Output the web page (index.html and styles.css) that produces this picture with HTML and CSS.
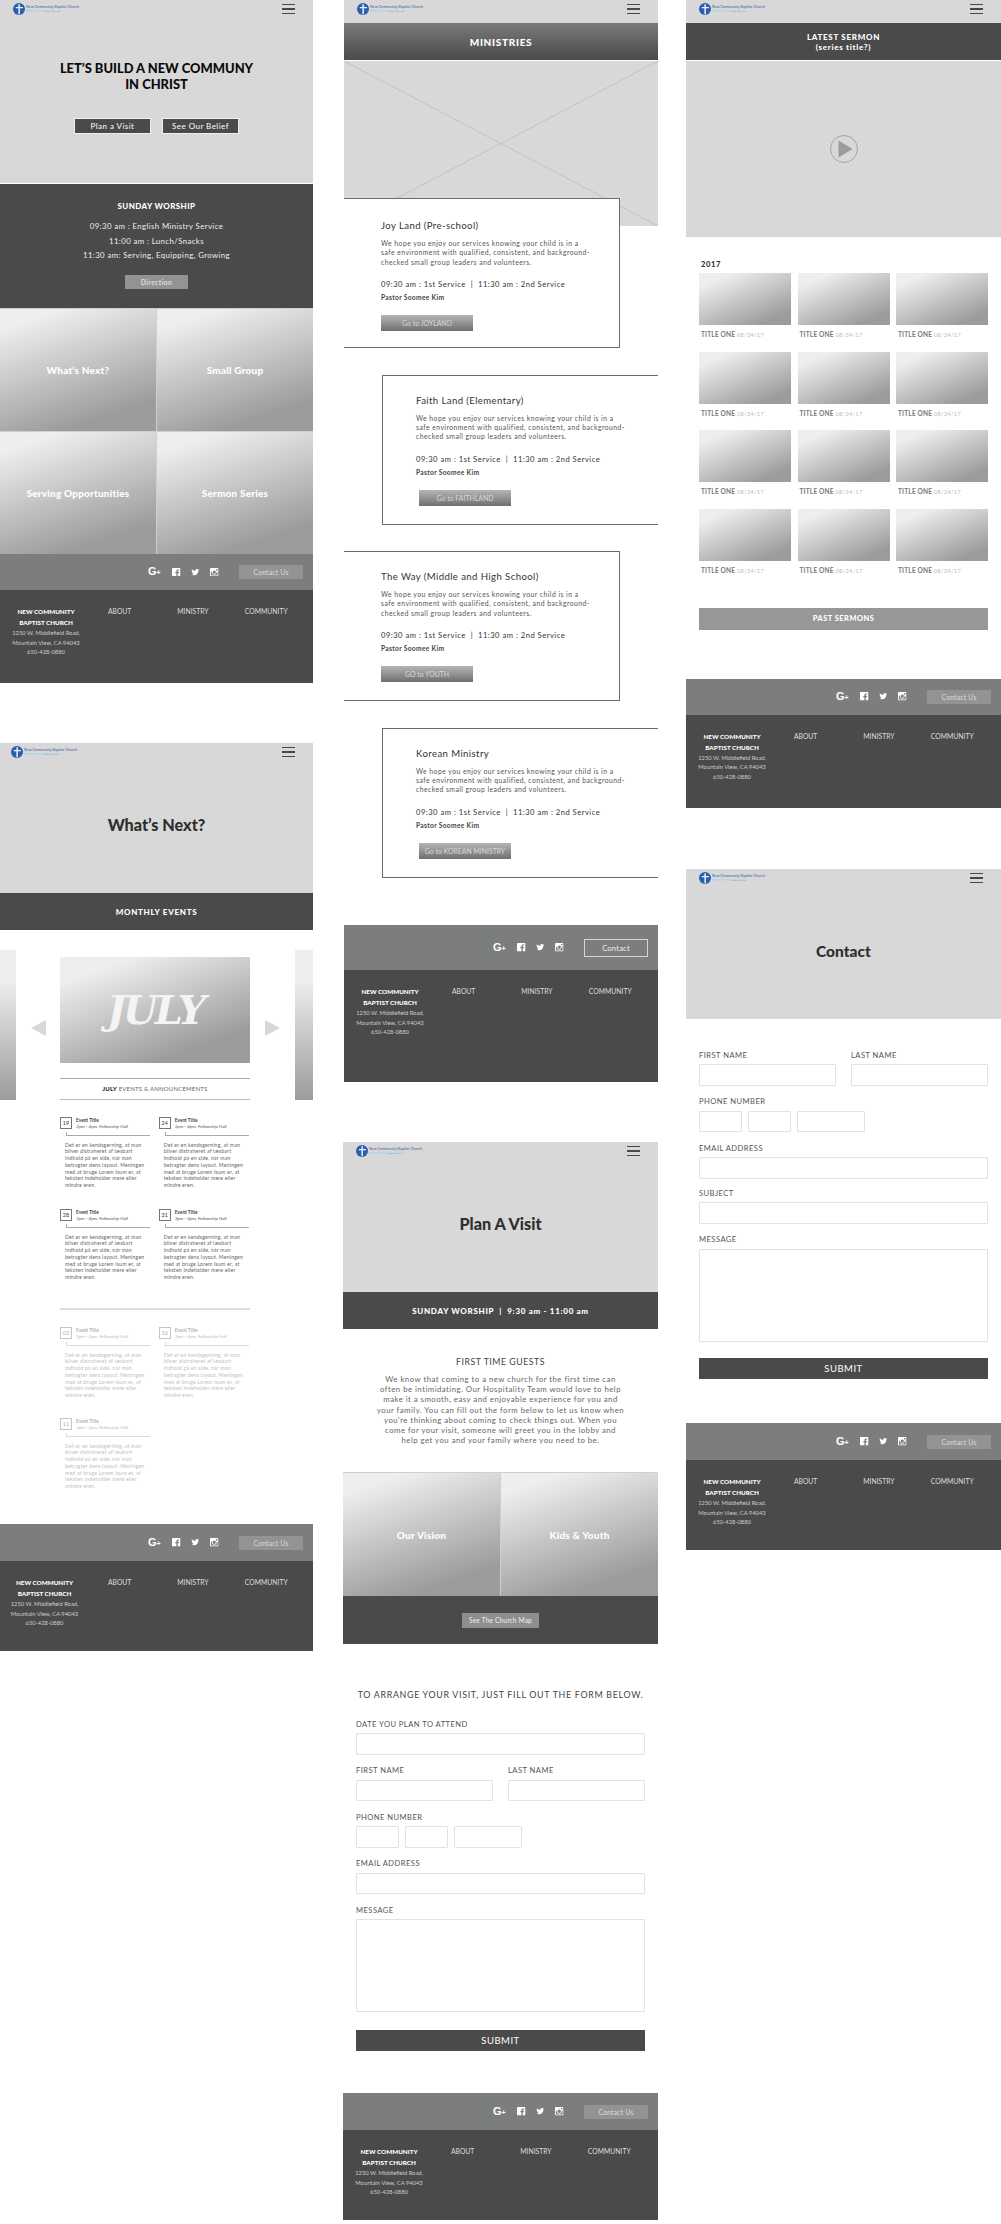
FILE: index.html
```html
<!DOCTYPE html>
<html lang="en">
<head>
    <meta charset="UTF-8">
    <meta name="viewport" content="width=device-width, initial-scale=1.0">
    <title>New Community Baptist Church - Wireframes</title>
    <link rel="stylesheet" href="styles.css">
</head>
<body>
    <svg class="defs" width="0" height="0">
        <symbol id="mark" viewBox="0 0 12 12">
            <circle cx="6" cy="6" r="6" fill="#2b5fae"/>
            <path d="M5.400 1.200h1.500v2.700h3v1.300h-3v6H5.400v-6H2.800V3.900h2.600z" fill="#eaf2fa"/>
        </symbol>
        <symbol id="fb" viewBox="0 0 12 12">
            <path fill-rule="evenodd" d="M1 0h10a1 1 0 0 1 1 1v10a1 1 0 0 1-1 1H8.200V7.400h1.500l.3-1.800H8.200V4.600c0-.6.2-.9.9-.9h1V2.100H8.600C6.900 2.100 6.200 3 6.200 4.400v1.200H4.700v1.800h1.500V12H1a1 1 0 0 1-1-1V1a1 1 0 0 1 1-1z"/>
        </symbol>
        <symbol id="tw" viewBox="0 0 24 24">
            <path d="M23 4.900a9 9 0 0 1-2.600.7 4.500 4.500 0 0 0 2-2.500 9 9 0 0 1-2.900 1.100 4.500 4.500 0 0 0-7.700 4.100A12.800 12.800 0 0 1 2.500 3.600a4.500 4.500 0 0 0 1.400 6A4.500 4.500 0 0 1 1.900 9v.1a4.500 4.500 0 0 0 3.600 4.400 4.500 4.500 0 0 1-2 .1 4.500 4.500 0 0 0 4.200 3.100A9 9 0 0 1 1 18.600 12.800 12.800 0 0 0 7.900 20.600c8.300 0 12.900-6.900 12.900-12.900v-.6A9 9 0 0 0 23 4.900z"/>
        </symbol>
        <symbol id="ig" viewBox="0 0 12 12">
            <path fill-rule="evenodd" d="M1.500 0h9A1.500 1.500 0 0 1 12 1.500v9a1.500 1.500 0 0 1-1.500 1.500h-9A1.500 1.500 0 0 1 0 10.500v-9A1.500 1.500 0 0 1 1.500 0zM8.500 1.500v2h2v-2zM6 3.700a2.300 2.300 0 1 0 0 4.600 2.300 2.300 0 0 0 0-4.600zM1.300 5.200v5.500h9.400V5.200H9.300a3.400 3.400 0 1 1-6.600 0z"/>
        </symbol>
    </svg>

    <div class="canvas">

        <!-- home -->
        <section class="board board-home">
            <div class="hero hero-home">
                <div class="nav">
                    <div class="logo"><svg class="logo-mark"><use href="#mark"/></svg><div class="logo-name">New Community Baptist Church<small>WELCOME</small></div></div>
                    <div class="burger"><i></i><i></i><i></i></div>
                </div>
                <h1 class="hero-lead">LET’S BUILD A NEW COMMUNY<br>IN CHRIST</h1>
                <div class="hero-btns">
                    <a class="btn-dark">Plan a Visit</a>
                    <a class="btn-dark">See Our Belief</a>
                </div>
            </div>
            <div class="worship">
                <h3>SUNDAY WORSHIP</h3>
                <p>09:30 am : English Ministry Service</p>
                <p>11:00 am : Lunch/Snacks</p>
                <p>11:30 am: Serving, Equipping, Growing</p>
                <a class="btn-grey">Direction</a>
            </div>
            <div class="tiles">
                <div class="tile">What’s Next?</div>
                <div class="tile">Small Group</div>
                <div class="tile">Serving Opportunities</div>
                <div class="tile">Sermon Series</div>
            </div>
            <footer>
                <div class="foot-bar">
                    <span class="gplus">G<small>+</small></span>
                    <svg class="soc"><use href="#fb"/></svg>
                    <svg class="soc"><use href="#tw"/></svg>
                    <svg class="soc"><use href="#ig"/></svg>
                    <a class="btn-contact">Contact Us</a>
                </div>
                <div class="foot-main">
                    <div class="foot-brand"><b>NEW COMMUNITY<br>BAPTIST CHURCH</b><p>1250 W. Middlefield Road,<br>Mountain View, CA 94043<br>650-428-0880</p></div>
                    <div>ABOUT</div>
                    <div>MINISTRY</div>
                    <div>COMMUNITY</div>
                </div>
            </footer>
        </section>

        <!-- ministries -->
        <section class="board board-min">
            <div class="nav">
                <div class="logo"><svg class="logo-mark"><use href="#mark"/></svg><div class="logo-name">New Community Baptist Church<small>WELCOME</small></div></div>
                <div class="burger"><i></i><i></i><i></i></div>
            </div>
            <div class="band band-grad">MINISTRIES</div>
            <svg class="placeholder" viewBox="0 0 314 165" preserveAspectRatio="none">
                <line x1="0" y1="0" x2="314" y2="165"/>
                <line x1="314" y1="0" x2="0" y2="165"/>
            </svg>
            <article class="card card-l card-first">
                <h4>Joy Land (Pre-school)</h4>
                <p>We hope you enjoy our services knowing your child is in a<br>safe environment with qualified, consistent, and background-<br>checked small group leaders and volunteers.</p>
                <div class="card-time">09:30 am : 1st Service &nbsp;|&nbsp; 11:30 am : 2nd Service</div>
                <div class="card-pastor">Pastor Soomee Kim</div>
                <a class="btn-go">Go to JOYLAND</a>
            </article>
            <article class="card card-r">
                <h4>Faith Land (Elementary)</h4>
                <p>We hope you enjoy our services knowing your child is in a<br>safe environment with qualified, consistent, and background-<br>checked small group leaders and volunteers.</p>
                <div class="card-time">09:30 am : 1st Service &nbsp;|&nbsp; 11:30 am : 2nd Service</div>
                <div class="card-pastor">Pastor Soomee Kim</div>
                <a class="btn-go">Go to FAITHLAND</a>
            </article>
            <article class="card card-l">
                <h4>The Way (Middle and High School)</h4>
                <p>We hope you enjoy our services knowing your child is in a<br>safe environment with qualified, consistent, and background-<br>checked small group leaders and volunteers.</p>
                <div class="card-time">09:30 am : 1st Service &nbsp;|&nbsp; 11:30 am : 2nd Service</div>
                <div class="card-pastor">Pastor Soomee Kim</div>
                <a class="btn-go">GO to YOUTH</a>
            </article>
            <article class="card card-r">
                <h4>Korean Ministry</h4>
                <p>We hope you enjoy our services knowing your child is in a<br>safe environment with qualified, consistent, and background-<br>checked small group leaders and volunteers.</p>
                <div class="card-time">09:30 am : 1st Service &nbsp;|&nbsp; 11:30 am : 2nd Service</div>
                <div class="card-pastor">Pastor Soomee Kim</div>
                <a class="btn-go">Go to KOREAN MINISTRY</a>
            </article>
            <footer class="foot-tall">
                <div class="foot-bar">
                    <span class="gplus">G<small>+</small></span>
                    <svg class="soc"><use href="#fb"/></svg>
                    <svg class="soc"><use href="#tw"/></svg>
                    <svg class="soc"><use href="#ig"/></svg>
                    <a class="btn-contact btn-outline">Contact</a>
                </div>
                <div class="foot-main">
                    <div class="foot-brand"><b>NEW COMMUNITY<br>BAPTIST CHURCH</b><p>1250 W. Middlefield Road,<br>Mountain View, CA 94043<br>650-428-0880</p></div>
                    <div>ABOUT</div>
                    <div>MINISTRY</div>
                    <div>COMMUNITY</div>
                </div>
            </footer>
        </section>

        <!-- sermons -->
        <section class="board board-sermon">
            <div class="nav">
                <div class="logo"><svg class="logo-mark"><use href="#mark"/></svg><div class="logo-name">New Community Baptist Church<small>WELCOME</small></div></div>
                <div class="burger"><i></i><i></i><i></i></div>
            </div>
            <div class="band band-two">LATEST SERMON<br>(series title?)</div>
            <div class="video">
                <svg width="30" height="30" viewBox="0 0 30 30">
                    <circle cx="15" cy="15" r="13.500" fill="none" stroke="#a3a3a3" stroke-width="1"/>
                    <path d="M9.500 6.500v17l14-8.500z" fill="#9b9b9b"/>
                </svg>
            </div>
            <div class="year">2017</div>
            <div class="thumbs">
                <figure><div class="thumb"></div><figcaption>TITLE ONE <span>08/24/17</span></figcaption></figure>
                <figure><div class="thumb"></div><figcaption>TITLE ONE <span>08/24/17</span></figcaption></figure>
                <figure><div class="thumb"></div><figcaption>TITLE ONE <span>08/24/17</span></figcaption></figure>
                <figure><div class="thumb"></div><figcaption>TITLE ONE <span>08/24/17</span></figcaption></figure>
                <figure><div class="thumb"></div><figcaption>TITLE ONE <span>08/24/17</span></figcaption></figure>
                <figure><div class="thumb"></div><figcaption>TITLE ONE <span>08/24/17</span></figcaption></figure>
                <figure><div class="thumb"></div><figcaption>TITLE ONE <span>08/24/17</span></figcaption></figure>
                <figure><div class="thumb"></div><figcaption>TITLE ONE <span>08/24/17</span></figcaption></figure>
                <figure><div class="thumb"></div><figcaption>TITLE ONE <span>08/24/17</span></figcaption></figure>
                <figure><div class="thumb"></div><figcaption>TITLE ONE <span>08/24/17</span></figcaption></figure>
                <figure><div class="thumb"></div><figcaption>TITLE ONE <span>08/24/17</span></figcaption></figure>
                <figure><div class="thumb"></div><figcaption>TITLE ONE <span>08/24/17</span></figcaption></figure>
            </div>
            <a class="btn-past">PAST SERMONS</a>
            <footer>
                <div class="foot-bar">
                    <span class="gplus">G<small>+</small></span>
                    <svg class="soc"><use href="#fb"/></svg>
                    <svg class="soc"><use href="#tw"/></svg>
                    <svg class="soc"><use href="#ig"/></svg>
                    <a class="btn-contact">Contact Us</a>
                </div>
                <div class="foot-main">
                    <div class="foot-brand"><b>NEW COMMUNITY<br>BAPTIST CHURCH</b><p>1250 W. Middlefield Road,<br>Mountain View, CA 94043<br>650-428-0880</p></div>
                    <div>ABOUT</div>
                    <div>MINISTRY</div>
                    <div>COMMUNITY</div>
                </div>
            </footer>
        </section>

        <!-- what's next -->
        <section class="board board-next">
            <div class="hero hero-page">
                <div class="nav nav-tight">
                    <div class="logo"><svg class="logo-mark"><use href="#mark"/></svg><div class="logo-name">New Community Baptist Church<small>WELCOME</small></div></div>
                    <div class="burger"><i></i><i></i><i></i></div>
                </div>
                <h1 class="hero-title">What’s Next?</h1>
            </div>
            <div class="band band-dark">MONTHLY EVENTS</div>
            <div class="carousel">
                <div class="side"></div>
                <div class="arrow arrow-l"></div>
                <div class="month">
                    <div class="month-img">JULY</div>
                    <div class="month-cap"><b>JULY</b> EVENTS &amp; ANNOUNCEMENTS</div>
                </div>
                <div class="arrow arrow-r"></div>
                <div class="side"></div>
            </div>
            <div class="events">
                <div class="event">
                    <div class="event-head"><span class="date">19</span><div><b>Event Title</b><em>3pm - 4pm, Fellowship Hall</em></div></div>
                    <div class="event-rule"></div>
                    <p>Det er en kendsgerning, at man<br>bliver distraheret af læsbart<br>indhold på en side, når man<br>betragter dens layout. Meningen<br>med at bruge Lorem Isum er, at<br>teksten indeholder mere eller<br>mindre eren.</p>
                </div>
                <div class="event">
                    <div class="event-head"><span class="date">24</span><div><b>Event Title</b><em>3pm - 4pm, Fellowship Hall</em></div></div>
                    <div class="event-rule"></div>
                    <p>Det er en kendsgerning, at man<br>bliver distraheret af læsbart<br>indhold på en side, når man<br>betragter dens layout. Meningen<br>med at bruge Lorem Isum er, at<br>teksten indeholder mere eller<br>mindre eren.</p>
                </div>
                <div class="event">
                    <div class="event-head"><span class="date">28</span><div><b>Event Title</b><em>3pm - 4pm, Fellowship Hall</em></div></div>
                    <div class="event-rule"></div>
                    <p>Det er en kendsgerning, at man<br>bliver distraheret af læsbart<br>indhold på en side, når man<br>betragter dens layout. Meningen<br>med at bruge Lorem Isum er, at<br>teksten indeholder mere eller<br>mindre eren.</p>
                </div>
                <div class="event">
                    <div class="event-head"><span class="date">31</span><div><b>Event Title</b><em>3pm - 4pm, Fellowship Hall</em></div></div>
                    <div class="event-rule"></div>
                    <p>Det er en kendsgerning, at man<br>bliver distraheret af læsbart<br>indhold på en side, når man<br>betragter dens layout. Meningen<br>med at bruge Lorem Isum er, at<br>teksten indeholder mere eller<br>mindre eren.</p>
                </div>
            </div>
            <div class="events-rule"></div>
            <div class="events events-past">
                <div class="event">
                    <div class="event-head"><span class="date">03</span><div><b>Event Title</b><em>3pm - 4pm, Fellowship Hall</em></div></div>
                    <div class="event-rule"></div>
                    <p>Det er en kendsgerning, at man<br>bliver distraheret af læsbart<br>indhold på en side, når man<br>betragter dens layout. Meningen<br>med at bruge Lorem Isum er, at<br>teksten indeholder mere eller<br>mindre eren.</p>
                </div>
                <div class="event">
                    <div class="event-head"><span class="date">10</span><div><b>Event Title</b><em>3pm - 4pm, Fellowship Hall</em></div></div>
                    <div class="event-rule"></div>
                    <p>Det er en kendsgerning, at man<br>bliver distraheret af læsbart<br>indhold på en side, når man<br>betragter dens layout. Meningen<br>med at bruge Lorem Isum er, at<br>teksten indeholder mere eller<br>mindre eren.</p>
                </div>
                <div class="event">
                    <div class="event-head"><span class="date">11</span><div><b>Event Title</b><em>3pm - 4pm, Fellowship Hall</em></div></div>
                    <div class="event-rule"></div>
                    <p>Det er en kendsgerning, at man<br>bliver distraheret af læsbart<br>indhold på en side, når man<br>betragter dens layout. Meningen<br>med at bruge Lorem Isum er, at<br>teksten indeholder mere eller<br>mindre eren.</p>
                </div>
            </div>
            <footer>
                <div class="foot-bar">
                    <span class="gplus">G<small>+</small></span>
                    <svg class="soc"><use href="#fb"/></svg>
                    <svg class="soc"><use href="#tw"/></svg>
                    <svg class="soc"><use href="#ig"/></svg>
                    <a class="btn-contact">Contact Us</a>
                </div>
                <div class="foot-main">
                    <div class="foot-brand"><b>NEW COMMUNITY<br>BAPTIST CHURCH</b><p>1250 W. Middlefield Road,<br>Mountain View, CA 94043<br>650-428-0880</p></div>
                    <div>ABOUT</div>
                    <div>MINISTRY</div>
                    <div>COMMUNITY</div>
                </div>
            </footer>
        </section>

        <!-- plan a visit -->
        <section class="board board-plan">
            <div class="hero hero-page">
                <div class="nav">
                    <div class="logo"><svg class="logo-mark"><use href="#mark"/></svg><div class="logo-name">New Community Baptist Church<small>WELCOME</small></div></div>
                    <div class="burger"><i></i><i></i><i></i></div>
                </div>
                <h1 class="hero-title">Plan A Visit</h1>
            </div>
            <div class="band band-dark">SUNDAY WORSHIP &nbsp;|&nbsp; 9:30 am - 11:00 am</div>
            <div class="guests">
                <h3>FIRST TIME GUESTS</h3>
                <p>We know that coming to a new church for the first time can<br>often be intimidating. Our Hospitality Team would love to help<br>make it a smooth, easy and enjoyable experience for you and<br>your family. You can fill out the form below to let us know when<br>you're thinking about coming to check things out. When you<br>come for your visit, someone will greet you in the lobby and<br>help get you and your family where you need to be.</p>
            </div>
            <div class="tiles">
                <div class="tile">Our Vision</div>
                <div class="tile">Kids &amp; Youth</div>
            </div>
            <div class="map-bar"><a class="btn-map">See The Church Map</a></div>
            <h3 class="form-lead">TO ARRANGE YOUR VISIT, JUST FILL OUT THE FORM BELOW.</h3>
            <form class="form">
                <label class="field">DATE YOU PLAN TO ATTEND<input type="text"></label>
                <div class="form-row">
                    <label class="field">FIRST NAME<input type="text"></label>
                    <label class="field">LAST NAME<input type="text"></label>
                </div>
                <div class="form-phone">
                    <label class="field">PHONE NUMBER<span class="phone"><input type="text"><input type="text"><input type="text"></span></label>
                </div>
                <label class="field">EMAIL ADDRESS<input type="text"></label>
                <label class="field">MESSAGE<textarea></textarea></label>
                <div class="submit">SUBMIT</div>
            </form>
            <footer class="foot-plan">
                <div class="foot-bar">
                    <span class="gplus">G<small>+</small></span>
                    <svg class="soc"><use href="#fb"/></svg>
                    <svg class="soc"><use href="#tw"/></svg>
                    <svg class="soc"><use href="#ig"/></svg>
                    <a class="btn-contact">Contact Us</a>
                </div>
                <div class="foot-main">
                    <div class="foot-brand"><b>NEW COMMUNITY<br>BAPTIST CHURCH</b><p>1250 W. Middlefield Road,<br>Mountain View, CA 94043<br>650-428-0880</p></div>
                    <div>ABOUT</div>
                    <div>MINISTRY</div>
                    <div>COMMUNITY</div>
                </div>
            </footer>
        </section>

        <!-- contact -->
        <section class="board board-contact">
            <div class="hero hero-page">
                <div class="nav">
                    <div class="logo"><svg class="logo-mark"><use href="#mark"/></svg><div class="logo-name">New Community Baptist Church<small>WELCOME</small></div></div>
                    <div class="burger"><i></i><i></i><i></i></div>
                </div>
                <h1 class="hero-title">Contact</h1>
            </div>
            <form class="form form-contact">
                <div class="form-row">
                    <label class="field">FIRST NAME<input type="text"></label>
                    <label class="field">LAST NAME<input type="text"></label>
                </div>
                <div class="form-phone">
                    <label class="field">PHONE NUMBER<span class="phone"><input type="text"><input type="text"><input type="text"></span></label>
                </div>
                <label class="field field-tight">EMAIL ADDRESS<input type="text"></label>
                <label class="field">SUBJECT<input type="text"></label>
                <label class="field">MESSAGE<textarea></textarea></label>
                <div class="submit">SUBMIT</div>
            </form>
            <footer class="foot-plan">
                <div class="foot-bar">
                    <span class="gplus">G<small>+</small></span>
                    <svg class="soc"><use href="#fb"/></svg>
                    <svg class="soc"><use href="#tw"/></svg>
                    <svg class="soc"><use href="#ig"/></svg>
                    <a class="btn-contact">Contact Us</a>
                </div>
                <div class="foot-main">
                    <div class="foot-brand"><b>NEW COMMUNITY<br>BAPTIST CHURCH</b><p>1250 W. Middlefield Road,<br>Mountain View, CA 94043<br>650-428-0880</p></div>
                    <div>ABOUT</div>
                    <div>MINISTRY</div>
                    <div>COMMUNITY</div>
                </div>
            </footer>
        </section>
    </div>
</body>
</html>
```

FILE: styles.css
```css
* {
    box-sizing: border-box;
}
body {
    margin: 0;
    background: #fff;
    font-family: 'Lato', 'Open Sans', sans-serif;
    color: #4a4a4a;
}
h1, h3, h4, p, figure {
    margin: 0;
}
.defs {
    position: absolute;
}
.canvas {
    position: relative;
    height: 2224px;
    overflow: hidden;
}

/* artboards sit freely on the sheet */
.board {
    position: absolute;
}
.board-home { left: 0; top: 0; width: 313px; }
.board-min { left: 344px; top: 0; width: 314px; }
.board-sermon { left: 686px; top: 0; width: 315px; }
.board-next { left: 0; top: 743px; width: 313px; }
.board-plan { left: 343px; top: 1142px; width: 315px; }
.board-contact { left: 686px; top: 869px; width: 315px; }

/* nav */
.nav {
    display: flex;
    justify-content: space-between;
    height: 23px;
    padding: 3px 18px 0 13px;
    background: #d8d8d8;
}
.nav-tight {
    padding-left: 11px;
}
.logo {
    display: flex;
    gap: 1px;
    width: 66px;
    height: 12px;
}
.logo-mark {
    flex: none;
    width: 12px;
    height: 12px;
}
.logo-name {
    padding-top: 1.500px;
    height: 11px;
    background: linear-gradient(90deg, #a8d4ee, #d8d8d8) no-repeat 0 7px / 44px 1.500px;
    color: #3d5f9e;
    font-size: 3.750px;
    line-height: 4.500px;
    text-align: center;
    white-space: nowrap;
}
.logo-name small {
    display: block;
    margin-top: 1px;
    font-size: 2.200px;
    line-height: 3px;
    letter-spacing: .6px;
    color: #5a8fc8;
}
.burger {
    display: flex;
    flex-direction: column;
    gap: 3.200px;
    width: 13px;
    padding-top: 1px;
}
.burger i {
    display: block;
    height: 1.300px;
    background: #484848;
}

/* hero */
.hero {
    background: #d8d8d8;
    text-align: center;
}
.hero-home {
    height: 183px;
}
.hero-lead {
    margin-top: 37px;
    font-size: 12.900px;
    line-height: 16px;
    font-weight: 900;
    color: #0b0b0b;
}
.hero-btns {
    display: flex;
    justify-content: center;
    gap: 11px;
    margin-top: 26px;
}
.btn-dark {
    width: 77px;
    height: 16px;
    background: #4a4a4a;
    border: 1px solid #eee;
    color: #fff;
    font-size: 8px;
    line-height: 14px;
    letter-spacing: .45px;
}
.hero-page {
    height: 150px;
}
.hero-title {
    margin-top: 47px;
    font-size: 16.200px;
    line-height: 24px;
    font-weight: 900;
    color: #2f2f2f;
}
.board-contact .hero-title {
    font-size: 15.500px;
}

/* worship block */
.worship {
    height: 124px;
    margin-top: 1px;
    padding-top: 17px;
    background: #4a4a4a;
    color: #eee;
    text-align: center;
    font-size: 7.800px;
    line-height: 14.600px;
    letter-spacing: .4px;
}
.worship h3 {
    margin-bottom: 7px;
    font-size: 8px;
    line-height: 11px;
    font-weight: 900;
    color: #fff;
}
.btn-grey {
    display: block;
    width: 63px;
    height: 14px;
    margin: 12px auto 0;
    background: #939393;
    color: #ddd;
    font-size: 6.700px;
    line-height: 14px;
    font-weight: 700;
}

/* gradient tiles */
.tiles {
    display: grid;
    grid-template-columns: 1fr 1fr;
    gap: 1px;
    padding-top: 1px;
    background: #cfcfcf;
}
.tile {
    display: flex;
    align-items: center;
    justify-content: center;
    height: 122px;
    background: linear-gradient(162deg, #eeeeee 12%, #9c9c9c 82%);
    color: #fff;
    font-size: 10px;
    font-weight: 900;
    letter-spacing: .2px;
}
.board-plan .tile {
    height: 123px;
}

/* footer */
.foot-bar {
    display: flex;
    align-items: center;
    justify-content: flex-end;
    height: 36px;
    padding-right: 10px;
    background: #7c7e7d;
    color: #fff;
}
.gplus {
    width: 13px;
    margin-right: 11px;
    font-family: 'Liberation Sans', sans-serif;
    font-size: 11px;
    line-height: 12px;
    font-weight: 700;
    white-space: nowrap;
}
.gplus small {
    font-size: 7px;
}
.soc {
    width: 8.500px;
    height: 8.500px;
    margin-right: 10.500px;
    fill: #fff;
}
.btn-contact {
    width: 64px;
    height: 14px;
    margin-left: 10px;
    background: #939393;
    color: #ddd;
    text-align: center;
    font-size: 6.800px;
    line-height: 14px;
    letter-spacing: .2px;
}
.btn-outline {
    height: 18px;
    background: none;
    border: 1px solid #d4d4d4;
    line-height: 16px;
    color: #eee;
    font-size: 7.600px;
}
.foot-main {
    display: grid;
    grid-template-columns: 83px repeat(3, 73.300px);
    height: 93px;
    padding-top: 16px;
    background: #4a4a4a;
    color: #ddd;
    text-align: center;
    font-size: 6.800px;
    line-height: 10px;
}
.foot-brand {
    padding-left: 9px;
    white-space: nowrap;
}
.foot-brand b {
    color: #fff;
    font-size: 6.300px;
    font-weight: 900;
}
.foot-brand p {
    font-size: 5.800px;
    line-height: 9.600px;
    color: #ccc;
}
.foot-tall {
    margin-top: 47.500px;
}
.foot-tall .foot-bar {
    height: 45px;
}
.foot-tall .foot-main {
    height: 112px;
}
.foot-plan .foot-bar {
    height: 37px;
}
.foot-plan .foot-main {
    height: 90px;
}

/* colour bands */
.band {
    display: flex;
    align-items: center;
    justify-content: center;
    height: 37px;
    color: #fff;
    font-size: 9.200px;
    font-weight: 900;
    letter-spacing: .7px;
    text-align: center;
}
.band-grad {
    margin-bottom: 1px;
    background: linear-gradient(#7a7a7a, #4a4a4a);
    font-size: 10px;
}
.band-two {
    margin-bottom: 1px;
    padding-top: 1px;
    background: #4a4a4a;
    font-size: 8px;
    line-height: 10.500px;
}
.band-dark {
    background: #4a4a4a;
    font-size: 8px;
}

/* ministries */
.placeholder {
    display: block;
    width: 100%;
    height: 165px;
    background: #d8d8d8;
}
.placeholder line {
    stroke: #bdbdbd;
    stroke-width: .8;
}
.card {
    position: relative;
    height: 150px;
    margin-top: 26.500px;
    padding-top: 19px;
    background: #fff;
    border: 1px solid #6a6a6a;
    white-space: nowrap;
}
.card-first {
    margin-top: -28px;
    padding-top: 21px;
}
.card-l {
    margin-right: 38px;
    padding-left: 37px;
    border-left: none;
}
.card-r {
    margin-left: 38px;
    padding-left: 33px;
    border-right: none;
}
.card h4 {
    font-size: 9.600px;
    line-height: 12px;
    font-weight: 400;
    letter-spacing: .4px;
    color: #333;
}
.card p {
    margin-top: 7px;
    font-size: 6.800px;
    line-height: 9.400px;
    letter-spacing: .46px;
    color: #555;
}
.card-time {
    margin-top: 12px;
    font-size: 7.600px;
    line-height: 10px;
    letter-spacing: .5px;
    color: #333;
}
.card-pastor {
    margin-top: 4px;
    font-size: 6.700px;
    line-height: 9px;
    letter-spacing: .3px;
    color: #444;
    font-weight: 700;
}
.btn-go {
    display: block;
    width: 92px;
    height: 16px;
    margin-top: 13px;
    background: linear-gradient(#b5b5b5, #6f6f6f);
    color: #d8d8d8;
    text-align: center;
    font-size: 6.900px;
    line-height: 16px;
}
.card-r .btn-go {
    margin-left: 3px;
}

/* sermons */
.video {
    display: flex;
    align-items: center;
    justify-content: center;
    height: 176px;
    background: #d8d8d8;
}
.year {
    margin: 22px 0 0 15px;
    font-size: 7.600px;
    line-height: 10px;
    font-weight: 900;
    letter-spacing: .6px;
    color: #333;
}
.thumbs {
    display: grid;
    grid-template-columns: repeat(3, 92px);
    column-gap: 6.500px;
    row-gap: 11.500px;
    margin: 4px 0 0 13px;
}
.thumb {
    height: 52px;
    background: linear-gradient(157deg, #eeeeee 15%, #9c9c9c 85%);
}
figcaption {
    margin: 4px 0 0 2px;
    font-size: 6.500px;
    line-height: 11px;
    font-weight: 700;
    letter-spacing: .2px;
    color: #777;
    white-space: nowrap;
}
figcaption span {
    font-weight: 400;
    font-size: 5.600px;
    color: #bbb;
    letter-spacing: .3px;
}
.btn-past {
    display: block;
    width: 289px;
    height: 22px;
    margin: 32px 0 49px 13px;
    background: #979797;
    color: #fff;
    text-align: center;
    font-size: 7.400px;
    line-height: 22px;
    font-weight: 900;
    letter-spacing: .5px;
}

/* what's next */
.carousel {
    display: grid;
    grid-template-columns: 16px 44px 190px 45px 18px;
    height: 150px;
    margin-top: 20px;
}
.side {
    height: 150px;
    background: linear-gradient(#eeeeee 20%, #9c9c9c);
}
.arrow {
    width: 0;
    height: 0;
    margin-top: 70px;
    justify-self: center;
    border-top: 8px solid transparent;
    border-bottom: 8px solid transparent;
}
.arrow-l {
    border-right: 15px solid #d8d8d8;
}
.arrow-r {
    border-left: 15px solid #d8d8d8;
}
.month {
    padding-top: 7px;
}
.month-img {
    height: 106px;
    background: linear-gradient(160deg, #eeeeee 15%, #9c9c9c 80%);
    color: #f4f4f4;
    text-align: center;
    font-family: 'DejaVu Serif', serif;
    font-size: 40px;
    line-height: 106px;
    font-style: italic;
    font-weight: 700;
    letter-spacing: -3px;
}
.month-cap {
    height: 22px;
    margin-top: 15px;
    border-top: 1px solid #aaa;
    border-bottom: 1px solid #bbb;
    text-align: center;
    font-size: 6px;
    line-height: 20px;
    letter-spacing: .2px;
    color: #666;
}
.month-cap b {
    font-weight: 900;
    color: #222;
}
.events {
    display: grid;
    grid-template-columns: repeat(2, 98.700px);
    grid-auto-rows: 92px;
    margin: 17px 0 0 60px;
}
.event-head {
    display: flex;
    gap: 4px;
    height: 12px;
    font-size: 4.800px;
    line-height: 6px;
    color: #444;
}
.event-head b, .event-head em {
    display: block;
}
.event-head b {
    font-weight: 700;
}
.event-head em {
    color: #555;
    font-size: 4.600px;
}
.date {
    width: 12px;
    height: 12px;
    border: 1px solid #777;
    text-align: center;
    font-size: 5.400px;
    line-height: 10px;
    color: #333;
}
.event-rule {
    width: 84px;
    height: 4px;
    margin: 3px 0 0 6px;
    border-left: 1px solid #aaa;
    border-bottom: 1px solid #aaa;
}
.event p {
    margin: 5.500px 0 0 5px;
    font-size: 5.200px;
    line-height: 6.750px;
    letter-spacing: .18px;
    color: #666;
    white-space: nowrap;
}
.events-rule {
    width: 190px;
    height: 2px;
    margin: 7px 0 0 60px;
    background: #ddd;
}
.events-past {
    margin-top: 17px;
    opacity: .42;
    grid-auto-rows: 91px;
}
.board-next footer {
    margin-top: 15px;
}
.board-next .foot-main {
    height: 90px;
}
.board-next .foot-bar {
    height: 37px;
}
.board-next .foot-brand {
    padding-left: 6px;
}

/* plan a visit */
.guests {
    padding-top: 27px;
    text-align: center;
}
.guests h3 {
    font-size: 8.800px;
    line-height: 12px;
    font-weight: 400;
    letter-spacing: .5px;
    color: #444;
}
.guests p {
    height: 98px;
    margin-top: 6px;
    font-size: 7.800px;
    line-height: 10.170px;
    letter-spacing: .47px;
    color: #666;
    white-space: nowrap;
}
.map-bar {
    height: 48px;
    padding-top: 17px;
    background: #4a4a4a;
}
.btn-map {
    display: block;
    width: 77px;
    height: 15px;
    margin: 0 auto;
    background: #8e8e8e;
    color: #eee;
    text-align: center;
    font-size: 6.600px;
    line-height: 15px;
    letter-spacing: .15px;
}
.form-lead {
    margin-top: 44px;
    text-align: center;
    font-size: 8.900px;
    line-height: 13px;
    font-weight: 400;
    letter-spacing: .68px;
    color: #444;
    white-space: nowrap;
}

/* forms */
.form {
    margin-top: 18.500px;
    padding: 0 13px;
}
.form-contact {
    margin-top: 31.500px;
}
.field {
    display: block;
    margin-bottom: 11.500px;
    font-size: 7.600px;
    line-height: 9px;
    letter-spacing: .45px;
    color: #555;
}
.field-tight {
    margin-bottom: 10px;
}
.field input, .field textarea {
    display: block;
    width: 100%;
    height: 21.500px;
    margin-top: 4.500px;
    padding: 0;
    background: #fff;
    border: 1px solid #e2e2e2;
    border-radius: 1px;
}
.field textarea {
    height: 93px;
    resize: none;
}
.form-row {
    display: grid;
    grid-template-columns: 137px 137px;
    column-gap: 15px;
}
.phone {
    display: flex;
    gap: 6px;
}
.phone input {
    width: 43px;
}
.phone input:last-child {
    width: 68px;
}
.submit {
    height: 21px;
    margin-top: 18px;
    background: #4a4a4a;
    color: #fff;
    text-align: center;
    font-size: 9.500px;
    line-height: 21px;
    letter-spacing: .5px;
}
.form-contact .submit {
    margin-top: 16.500px;
}
.foot-plan {
    margin-top: 42px;
}
.board-contact .foot-plan {
    margin-top: 44px;
}
```
